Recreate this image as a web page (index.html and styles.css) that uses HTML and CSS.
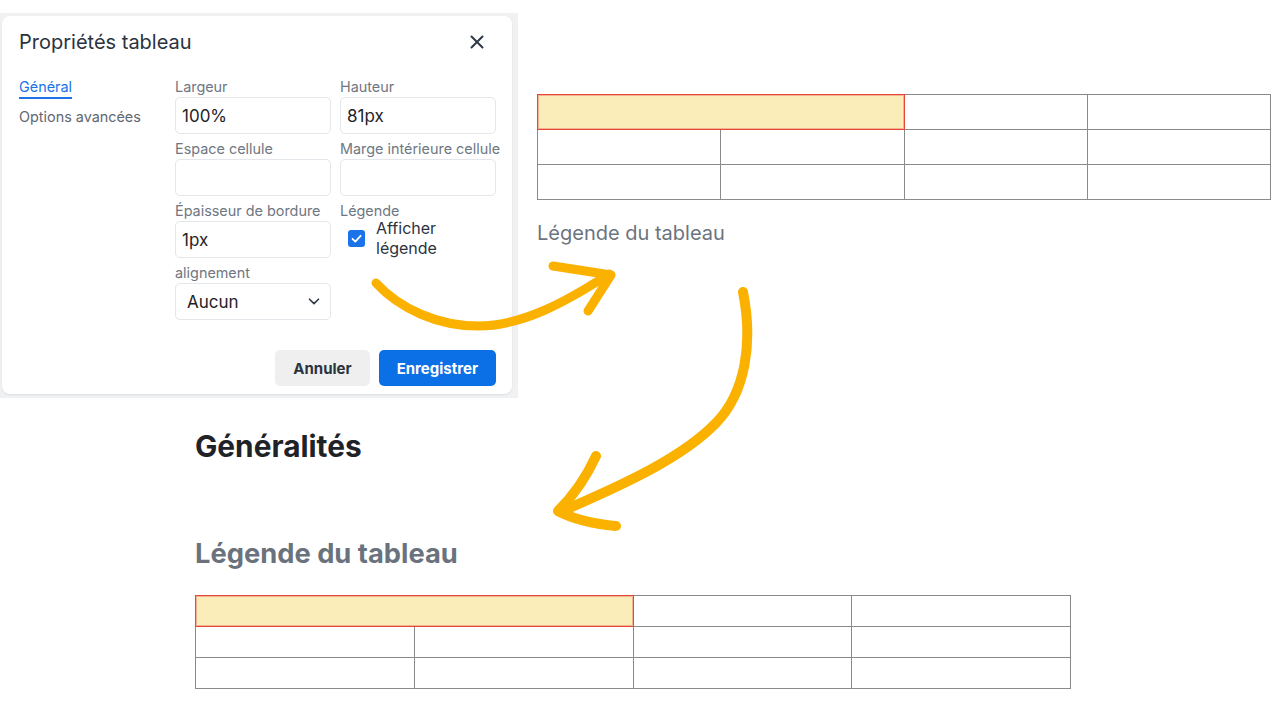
FILE: index.html
```html
<!DOCTYPE html>
<html lang="fr">
<head>
<meta charset="utf-8">
<title>Propriétés tableau</title>
<link rel="stylesheet" href="styles.css">
</head>
<body>
<div class="page">
  <div class="top">
    <div class="shot">
      <div class="dialog">
        <div class="dlg-head">
          <h1 class="dlg-title">Propriétés tableau</h1>
          <button class="close" aria-label="Fermer">
            <svg width="14" height="14" viewBox="0 0 14 14"><path d="M1.5 1.5 L12.5 12.5 M12.5 1.5 L1.5 12.5" stroke="#2f3945" stroke-width="2" stroke-linecap="round" fill="none"/></svg>
          </button>
        </div>
        <div class="dlg-body">
          <nav class="tabs">
            <a class="tab active">Général</a>
            <a class="tab">Options avancées</a>
          </nav>
          <div class="form">
            <div class="field">
              <label class="lbl">Largeur</label>
              <input class="inp" type="text" value="100%">
            </div>
            <div class="field">
              <label class="lbl">Hauteur</label>
              <input class="inp" type="text" value="81px">
            </div>
            <div class="field">
              <label class="lbl">Espace cellule</label>
              <input class="inp" type="text" value="">
            </div>
            <div class="field">
              <label class="lbl">Marge intérieure cellule</label>
              <input class="inp" type="text" value="">
            </div>
            <div class="field">
              <label class="lbl">Épaisseur de bordure</label>
              <input class="inp" type="text" value="1px">
            </div>
            <div class="field">
              <label class="lbl">Légende</label>
              <div class="check-row">
                <span class="checkbox">
                  <svg width="17" height="17" viewBox="0 0 17 17"><path d="M4.5 8.8 L7.3 11.6 L12.6 5.8" stroke="#fff" stroke-width="1.8" stroke-linecap="round" stroke-linejoin="round" fill="none"/></svg>
                </span>
                <span class="check-text">Afficher légende</span>
              </div>
            </div>
            <div class="field">
              <label class="lbl">alignement</label>
              <div class="inp select">
                <span>Aucun</span>
                <svg width="12" height="7" viewBox="0 0 12 7"><path d="M1.5 1.2 L6 5.6 L10.5 1.2" stroke="#2f3945" stroke-width="1.6" stroke-linecap="round" stroke-linejoin="round" fill="none"/></svg>
              </div>
            </div>
          </div>
        </div>
        <div class="dlg-foot">
          <button class="btn btn-cancel">Annuler</button>
          <button class="btn btn-save">Enregistrer</button>
        </div>
      </div>
    </div>
    <div class="preview">
      <table class="tbl tbl-sm">
        <tr><td class="sel" colspan="2"></td><td></td><td></td></tr>
        <tr><td></td><td></td><td></td><td></td></tr>
        <tr><td></td><td></td><td></td><td></td></tr>
      </table>
      <p class="cap-light">Légende du tableau</p>
    </div>
  </div>
  <div class="bottom">
    <h2 class="heading">Généralités</h2>
    <h3 class="cap-bold">Légende du tableau</h3>
    <table class="tbl tbl-lg">
      <tr><td class="sel" colspan="2"></td><td></td><td></td></tr>
      <tr><td></td><td></td><td></td><td></td></tr>
      <tr><td></td><td></td><td></td><td></td></tr>
    </table>
  </div>
  <svg class="arrows" width="1280" height="720" viewBox="0 0 1280 720">
    <g fill="none" stroke="#fbb100" stroke-linecap="round" stroke-linejoin="round">
      <path d="M376 283 C400 309 438 326 478 326 C522 326 566 302 609 274" stroke-width="9"/>
      <path d="M553 266 L611 275 L588 311" stroke-width="9"/>
      <path d="M743 292 C753 342 746 392 716 423 C684 456 630 482 560 512" stroke-width="10"/>
      <path d="M596 456 C585 480 572 497 558 511 C575 520 595 524 616 526" stroke-width="10"/>
    </g>
  </svg>
</div>
</body>
</html>
```
FILE: styles.css
```css
* { box-sizing: border-box; }
html, body { margin: 0; padding: 0; background: #ffffff; }
.page {
  position: relative;
  width: 1280px;
  height: 720px;
  overflow: hidden;
  font-family: Inter, "Noto Sans", "Liberation Sans", sans-serif;
  color: #1f2328;
}
.top {
  display: flex;
  align-items: flex-start;
  padding-top: 13px;
}
.shot {
  width: 518px;
  padding: 3px 6px 4px 2px;
  background: #f0f1f2;
}
.dialog {
  background: #ffffff;
  border-radius: 8px;
  padding: 14px 16px 8px 17px;
  box-shadow: 0 1px 2px rgba(0,0,0,0.08);
}
.dlg-head {
  display: flex;
  justify-content: space-between;
  align-items: center;
  height: 24px;
}
.dlg-title {
  margin: 0;
  font-size: 20px;
  line-height: 24px;
  font-weight: 400;
  color: #2b333e;
}
.close {
  border: 0;
  background: none;
  padding: 0;
  margin-right: 12px;
  width: 14px;
  height: 14px;
  display: flex;
}
.dlg-body {
  display: flex;
  margin-top: 25px;
}
.tabs {
  width: 157px;
  display: flex;
  flex-direction: column;
  align-items: flex-start;
}
.tab {
  font-size: 14.4px;
  line-height: 16px;
  color: #5f6872;
}
.tab.active {
  color: #1a73e8;
  border-bottom: 2px solid #1a73e8;
  padding-bottom: 2px;
}
.tab + .tab { margin-top: 10px; }
.form {
  display: grid;
  grid-template-columns: 156px 156px;
  column-gap: 9px;
  row-gap: 7px;
}
.field { display: flex; flex-direction: column; }
.lbl {
  font-size: 14.4px;
  line-height: 16px;
  color: #6f7782;
  margin-bottom: 2px;
  white-space: nowrap;
}
.inp {
  height: 37px;
  width: 100%;
  border: 1px solid #e3e6ea;
  border-radius: 5px;
  background: #fff;
  font-family: inherit;
  font-size: 17px;
  color: #1f2328;
  padding: 0 6px;
  outline: none;
}
.select {
  display: flex;
  align-items: center;
  justify-content: space-between;
  padding: 0 10px 0 11px;
}
.check-row {
  display: flex;
  align-items: center;
  gap: 11px;
  padding-left: 8px;
  margin-top: -3px;
}
.checkbox {
  width: 17px;
  height: 17px;
  border-radius: 3px;
  background: #1a73e8;
  display: flex;
  flex: none;
}
.check-text {
  width: 100px;
  font-size: 16px;
  line-height: 20px;
  color: #2b333e;
}
.dlg-foot {
  display: flex;
  justify-content: flex-end;
  gap: 9px;
  margin-top: 30px;
}
.btn {
  height: 36px;
  border: 0;
  border-radius: 5px;
  padding: 0 18px;
  font-family: inherit;
  font-size: 15px;
  font-weight: 700;
}
.btn-cancel { background: #efefef; color: #2b333e; }
.btn-save { background: #0b6fe6; color: #ffffff; }

.preview {
  margin-left: 19px;
  padding-top: 81px;
}
.tbl {
  border-collapse: collapse;
  table-layout: fixed;
}
.tbl td {
  border: 1px solid #8a8a8a;
  padding: 0;
}
.tbl td.sel {
  background: #faedb9;
  border: 1px solid #e5483a;
  box-shadow: inset 0 0 0 1px rgba(229,72,58,0.35);
}
.tbl-sm { width: 734px; }
.tbl-sm tr { height: 35px; }
.cap-light {
  margin: 21px 0 0;
  font-size: 20px;
  line-height: 24px;
  color: #6b7480;
}
.bottom {
  padding-left: 195px;
}
.heading {
  margin: 31px 0 0;
  font-size: 29.8px;
  line-height: 35px;
  font-weight: 700;
  color: #1f2328;
}
.cap-bold {
  margin: 73px 0 0;
  font-size: 27.3px;
  line-height: 33px;
  font-weight: 700;
  color: #6a737d;
}
.tbl-lg { width: 876px; margin-top: 25px; }
.tbl-lg tr { height: 31px; }
.arrows {
  position: absolute;
  left: 0;
  top: 0;
  pointer-events: none;
}
```
